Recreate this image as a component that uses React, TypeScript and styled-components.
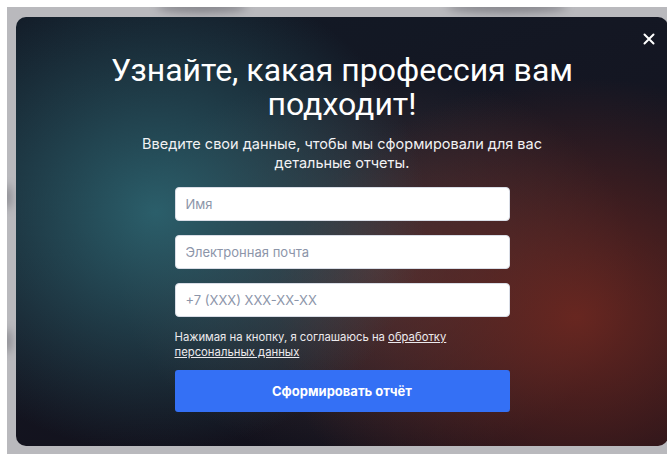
import styled, {createGlobalStyle} from 'styled-components';

const GlobalStyle = createGlobalStyle`
  html, body {
    margin: 0;
    padding: 0;
    background: #ffffff;
  }
  * {
    box-sizing: border-box;
  }
`;

const Page = styled.div`
  width: 667px;
  height: 454px;
  padding: 7px 0 0 7px;
  overflow: hidden;
`;

const Backdrop = styled.div`
  position: relative;
  height: 460px;
  padding: 10px 0 0 9px;
  background: #b9b9bd;
  overflow: hidden;
`;

// soft shadows of the page sitting behind the blurred backdrop
const Smudge = styled.div<{$x: number; $y: number; $w: number; $h: number}>`
  position: absolute;
  left: ${(p) => p.$x}px;
  top: ${(p) => p.$y}px;
  width: ${(p) => p.$w}px;
  height: ${(p) => p.$h}px;
  border-radius: 50%;
  background: rgba(70, 70, 80, 0.45);
  filter: blur(4px);
`;

const Modal = styled.div`
  position: relative;
  width: 652px;
  height: 429px;
  border-radius: 10px;
  overflow: hidden;
  padding-top: 36px;
  display: flex;
  flex-direction: column;
  align-items: center;
  background:
    radial-gradient(ellipse 270px 240px at 140px 195px, rgba(44, 98, 110, 0.95), rgba(44, 98, 110, 0) 100%),
    radial-gradient(ellipse 300px 240px at 560px 300px, rgba(112, 40, 32, 0.9), rgba(112, 40, 32, 0) 100%),
    radial-gradient(ellipse 260px 200px at 360px 250px, rgba(84, 64, 66, 0.75), rgba(84, 64, 66, 0) 100%),
    linear-gradient(160deg, #121a26 0%, #141622 45%, #110e18 100%);
`;

const Close = styled.button`
  position: absolute;
  top: 14px;
  right: 11px;
  width: 16px;
  height: 16px;
  padding: 0;
  border: 0;
  background: transparent;
  cursor: pointer;
  display: flex;
  align-items: center;
  justify-content: center;
`;

const Title = styled.h1`
  margin: 0;
  width: 500px;
  font-family: Roboto, 'Liberation Sans', sans-serif;
  font-weight: 400;
  font-size: 32px;
  line-height: 34px;
  color: #ffffff;
  text-align: center;
`;

const Subtitle = styled.p`
  margin: 13px 0 0;
  width: 420px;
  font-family: Inter, 'Noto Sans', sans-serif;
  font-size: 14.5px;
  line-height: 19px;
  color: #f2f2f4;
  text-align: center;
`;

const Form = styled.form`
  margin-top: 15px;
  width: 335px;
  display: flex;
  flex-direction: column;
`;

const Field = styled.input`
  width: 100%;
  height: 34px;
  padding: 0 10px;
  border: 1px solid #d9dde6;
  border-radius: 4px;
  background: #ffffff;
  font-family: Inter, 'Noto Sans', sans-serif;
  font-size: 13px;
  color: #1d2433;
  outline: none;

  & + & {
    margin-top: 14px;
  }

  &::placeholder {
    color: #8c95a9;
  }
`;

const Consent = styled.p`
  margin: 13px 0 10px;
  font-family: Inter, 'Noto Sans', sans-serif;
  font-size: 11.3px;
  line-height: 15px;
  color: #eceaed;

  a {
    color: inherit;
    text-decoration: underline;
  }
`;

const Submit = styled.button`
  height: 42px;
  border: 0;
  border-radius: 3px;
  background: #3470f5;
  font-family: Inter, 'Noto Sans', sans-serif;
  font-weight: 700;
  font-size: 13px;
  color: #ffffff;
  cursor: pointer;
`;

export default function App() {
  return (
    <Page>
      <GlobalStyle />
      <Backdrop>
        <Smudge $x={150} $y={-6} $w={90} $h={12} />
        <Smudge $x={440} $y={-6} $w={120} $h={12} />
        <Smudge $x={-4} $y={178} $w={8} $h={24} />
        <Smudge $x={-4} $y={322} $w={8} $h={24} />
        <Modal>
          <Close type="button" aria-label="Закрыть">
            <svg width="12" height="12" viewBox="0 0 12 12">
              <path d="M1.5 1.5 L10.5 10.5 M10.5 1.5 L1.5 10.5" stroke="#ffffff" strokeWidth="2" strokeLinecap="round" />
            </svg>
          </Close>
          <Title>Узнайте, какая профессия вам подходит!</Title>
          <Subtitle>Введите свои данные, чтобы мы сформировали для вас детальные отчеты.</Subtitle>
          <Form onSubmit={(e) => e.preventDefault()}>
            <Field placeholder="Имя" />
            <Field placeholder="Электронная почта" type="email" />
            <Field placeholder="+7 (XXX) XXX-XX-XX" type="tel" />
            <Consent>
              Нажимая на кнопку, я соглашаюсь на <a href="#">обработку персональных данных</a>
            </Consent>
            <Submit type="submit">Сформировать отчёт</Submit>
          </Form>
        </Modal>
      </Backdrop>
    </Page>
  );
}
